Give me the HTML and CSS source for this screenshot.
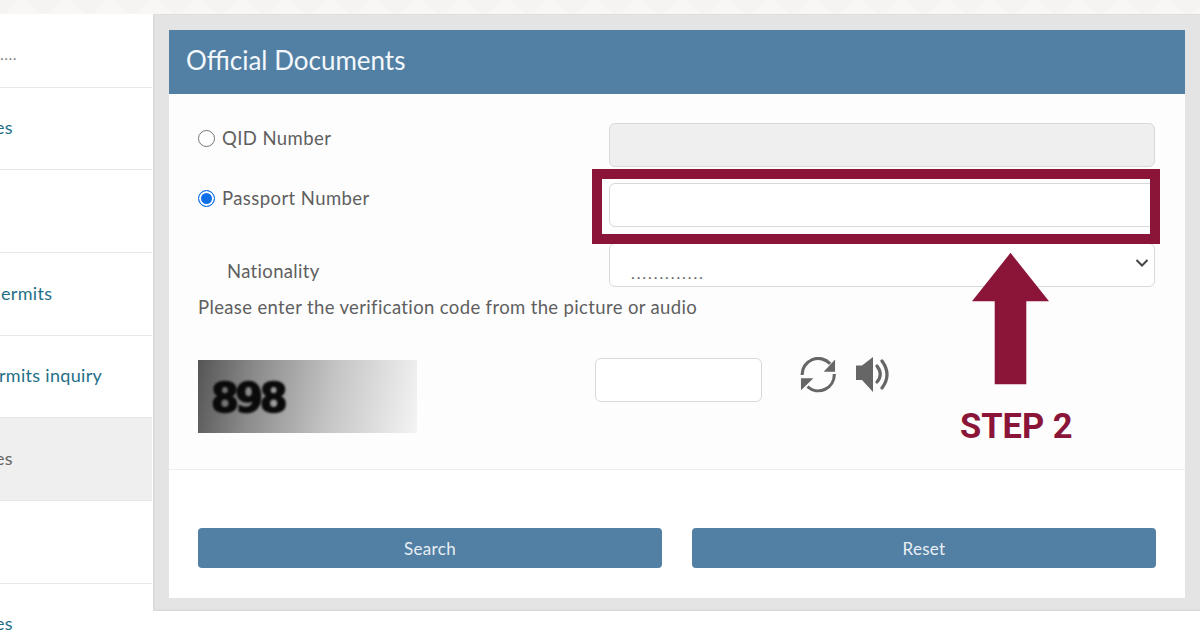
FILE: index.html
```html
<!DOCTYPE html>
<html lang="en">
<head>
<meta charset="utf-8">
<title>Official Documents</title>
<link rel="stylesheet" href="styles.css">
</head>
<body>
<div class="page">
  <div class="top-strip"></div>
  <div class="main">
    <nav class="sidebar">
      <div class="side-item side-muted">....</div>
      <div class="side-item side-es">es</div>
      <div class="side-item"></div>
      <div class="side-item side-ermits">ermits</div>
      <div class="side-item side-cut">rmits inquiry</div>
      <div class="side-item side-active side-es">es</div>
      <div class="side-item"></div>
      <div class="side-item side-es">es</div>
    </nav>
    <div class="content">
      <section class="panel">
        <header class="panel-head">Official Documents</header>
        <div class="panel-body">
          <div class="form-row">
            <label class="radio-label"><span class="radio"></span>QID Number</label>
            <div class="field field-disabled"></div>
          </div>
          <div class="form-row">
            <label class="radio-label"><span class="radio radio-on"></span>Passport Number</label>
            <div class="field"></div>
          </div>
          <div class="form-row form-row-nat">
            <label class="nat-label">Nationality</label>
            <div class="field field-select">
              <span class="select-value">.............</span>
              <svg class="chevron" viewBox="0 0 14 10"><path d="M1.5 2 7 7.5 12.5 2" fill="none" stroke="#444" stroke-width="2"/></svg>
            </div>
          </div>
          <p class="hint">Please enter the verification code from the picture or audio</p>
          <div class="captcha-row">
            <div class="captcha-img"><span class="captcha-code">898</span></div>
            <div class="captcha-input"></div>
            <svg class="cap-icon cap-refresh" viewBox="0 0 38 36">
              <path d="M2.200 18A16.500 16.500 0 0 1 31 6.500M35.200 17A16.500 16.500 0 0 1 7.700 30" fill="none" stroke="#666" stroke-width="3.200"/>
              <path d="M36 2v12.700H24.300zM1 21.300h12.700L1 33.700z" fill="#666"/>
            </svg>
            <svg class="cap-icon cap-sound" viewBox="0 0 36 36">
              <path d="M1 8.500h6L18 0v35L7 23H1z" fill="#666"/>
              <path d="M22 9q6.500 8.500 0 16M27 4q10 13.500 0 27" fill="none" stroke="#666" stroke-width="3.200" stroke-linecap="round"/>
            </svg>
          </div>
        </div>
        <div class="panel-foot">
          <button class="btn">Search</button>
          <button class="btn">Reset</button>
        </div>
      </section>
      <div class="content-bottom"></div>
    </div>
  </div>
  <div class="callout-box"></div>
  <svg class="callout-arrow" viewBox="0 0 78 133"><path d="M39 0 78 49H55V133H23V49H0z" fill="#8a1538"/></svg>
  <div class="callout-label">STEP 2</div>
</div>
</body>
</html>
```
FILE: styles.css
```css
* { box-sizing: border-box; }
html, body { margin: 0; padding: 0; }
body { background: #fff; font-family: "Lato", "Noto Sans", sans-serif; color: #555; }
.page { position: relative; width: 1200px; height: 630px; overflow: hidden; display: flex; flex-direction: column; }
.top-strip { height: 14px; flex: none; background-color: #f8f7f6; background-image: linear-gradient(135deg, #f5f4f2 25%, transparent 25% 75%, #f5f4f2 75%), linear-gradient(45deg, #f5f4f2 25%, transparent 25% 75%, #f5f4f2 75%); background-size: 44px 28px; }
.main { flex: 1; display: flex; min-height: 0; }
.sidebar { width: 153px; flex: none; display: flex; flex-direction: column; background: #fff; }
.side-item { height: 82.7px; flex: none; display: flex; align-items: center; font-size: 18px; letter-spacing: 0.3px; color: #1f6f88; border-bottom: 1.500px solid #e8e8e8; margin-right: 1px; padding-bottom: 2px; white-space: nowrap; }
.side-item:first-child { height: 73.500px; padding-top: 6px; padding-bottom: 0; }
.side-muted { color: #888; font-size: 16px; letter-spacing: 0.5px; }
.side-es { text-indent: -5px; }
.side-ermits { text-indent: 1px; }
.side-cut { text-indent: -1px; }
.side-active { background: #efefef; color: #666; }
.content { flex: 1; display: flex; flex-direction: column; min-width: 0; background: #fff; }
.panel { padding: 15px 15px 11px 14px; background: #e4e4e4; border-left: 2px solid #dcdcdc; border-top: 1px solid #dedede; border-bottom: 2px solid #dcdcdc; height: 597px; display: flex; flex-direction: column; }
.panel-head { height: 64px; flex: none; background: #527fa4; color: #f4f8fb; font-size: 26px; line-height: 60px; padding-left: 17px; }
.panel-body { flex: none; height: 376px; background: #fdfdfd; padding: 29px 30px 0 29px; border-bottom: 1px solid #eeeeee; }
.form-row { display: flex; height: 44px; margin-bottom: 16px; }
.form-row-nat { margin-bottom: 0; height: 44px; }
.radio-label { width: 411px; flex: none; display: flex; align-items: flex-start; font-size: 18.500px; letter-spacing: 0.42px; line-height: 30px; color: #5f5f5f; }
.radio { width: 17px; height: 17px; margin: 7px 7px 0 0; flex: none; border-radius: 50%; border: 1.500px solid #777; background: #fff; }
.radio-on { border: 1.500px solid #0f6fe8; box-shadow: inset 0 0 0 2px #fff; background: #0f6fe8; }
.nat-label { width: 411px; flex: none; padding: 15px 0 0 29px; font-size: 18.500px; letter-spacing: 0.33px; line-height: 26px; color: #5f5f5f; }
.field { width: 546px; flex: none; border: 1px solid #d9d9d9; border-radius: 6px; background: #fff; }
.field-disabled { background: #efefef; }
.field-select { display: flex; align-items: flex-end; justify-content: space-between; padding: 0 5px 0 21px; }
.select-value { font-size: 16px; line-height: 24px; color: #666; letter-spacing: 1.9px; padding-bottom: 1px; }
.chevron { width: 14px; height: 10px; align-self: center; margin-top: -4px; }
.hint { margin: 7px 0 0; font-size: 18.500px; letter-spacing: 0.36px; line-height: 27px; color: #5f5f5f; }
.captcha-row { display: flex; align-items: flex-start; margin-top: 37px; }
.captcha-img { width: 219px; height: 73px; margin-top: 2px; flex: none; background: linear-gradient(100deg, #555 0%, #8a8a8a 25%, #c4c4c4 60%, #f4f4f4 100%); padding: 16px 0 0 13px; overflow: hidden; }
.captcha-code { display: block; font-family: "DejaVu Sans", sans-serif; font-weight: 700; font-size: 40px; line-height: 44px; letter-spacing: -3.500px; color: #0a0a0a; -webkit-text-stroke: 1.500px #0a0a0a; filter: blur(0.8px); }
.captcha-input { width: 167px; height: 44px; margin-left: 178px; flex: none; border: 1px solid #d9d9d9; border-radius: 6px; background: #fff; }
.cap-icon { flex: none; height: 36px; margin-top: -1px; }
.cap-refresh { width: 37px; margin-left: 38px; }
.cap-sound { width: 36px; margin-left: 18px; }
.panel-foot { flex: 1; background: #fff; display: flex; gap: 30px; padding: 58px 29px 0 29px; }
.btn { width: 464px; height: 40px; border: 0; border-radius: 4px; background: #527fa4; color: #e9eff4; font-family: "Lato", sans-serif; font-size: 17px; letter-spacing: 0.3px; }
.content-bottom { flex: 1; background: #fff; }
.callout-box { position: absolute; left: 592px; top: 169px; width: 568px; height: 75px; border: 10px solid #8a1538; }
.callout-arrow { position: absolute; left: 972px; top: 252px; width: 77px; height: 133px; }
.callout-label { position: absolute; left: 960px; top: 405px; font-family: "Roboto", sans-serif; font-weight: 700; font-size: 34.500px; line-height: 42px; color: #8a1538; white-space: nowrap; }
```
